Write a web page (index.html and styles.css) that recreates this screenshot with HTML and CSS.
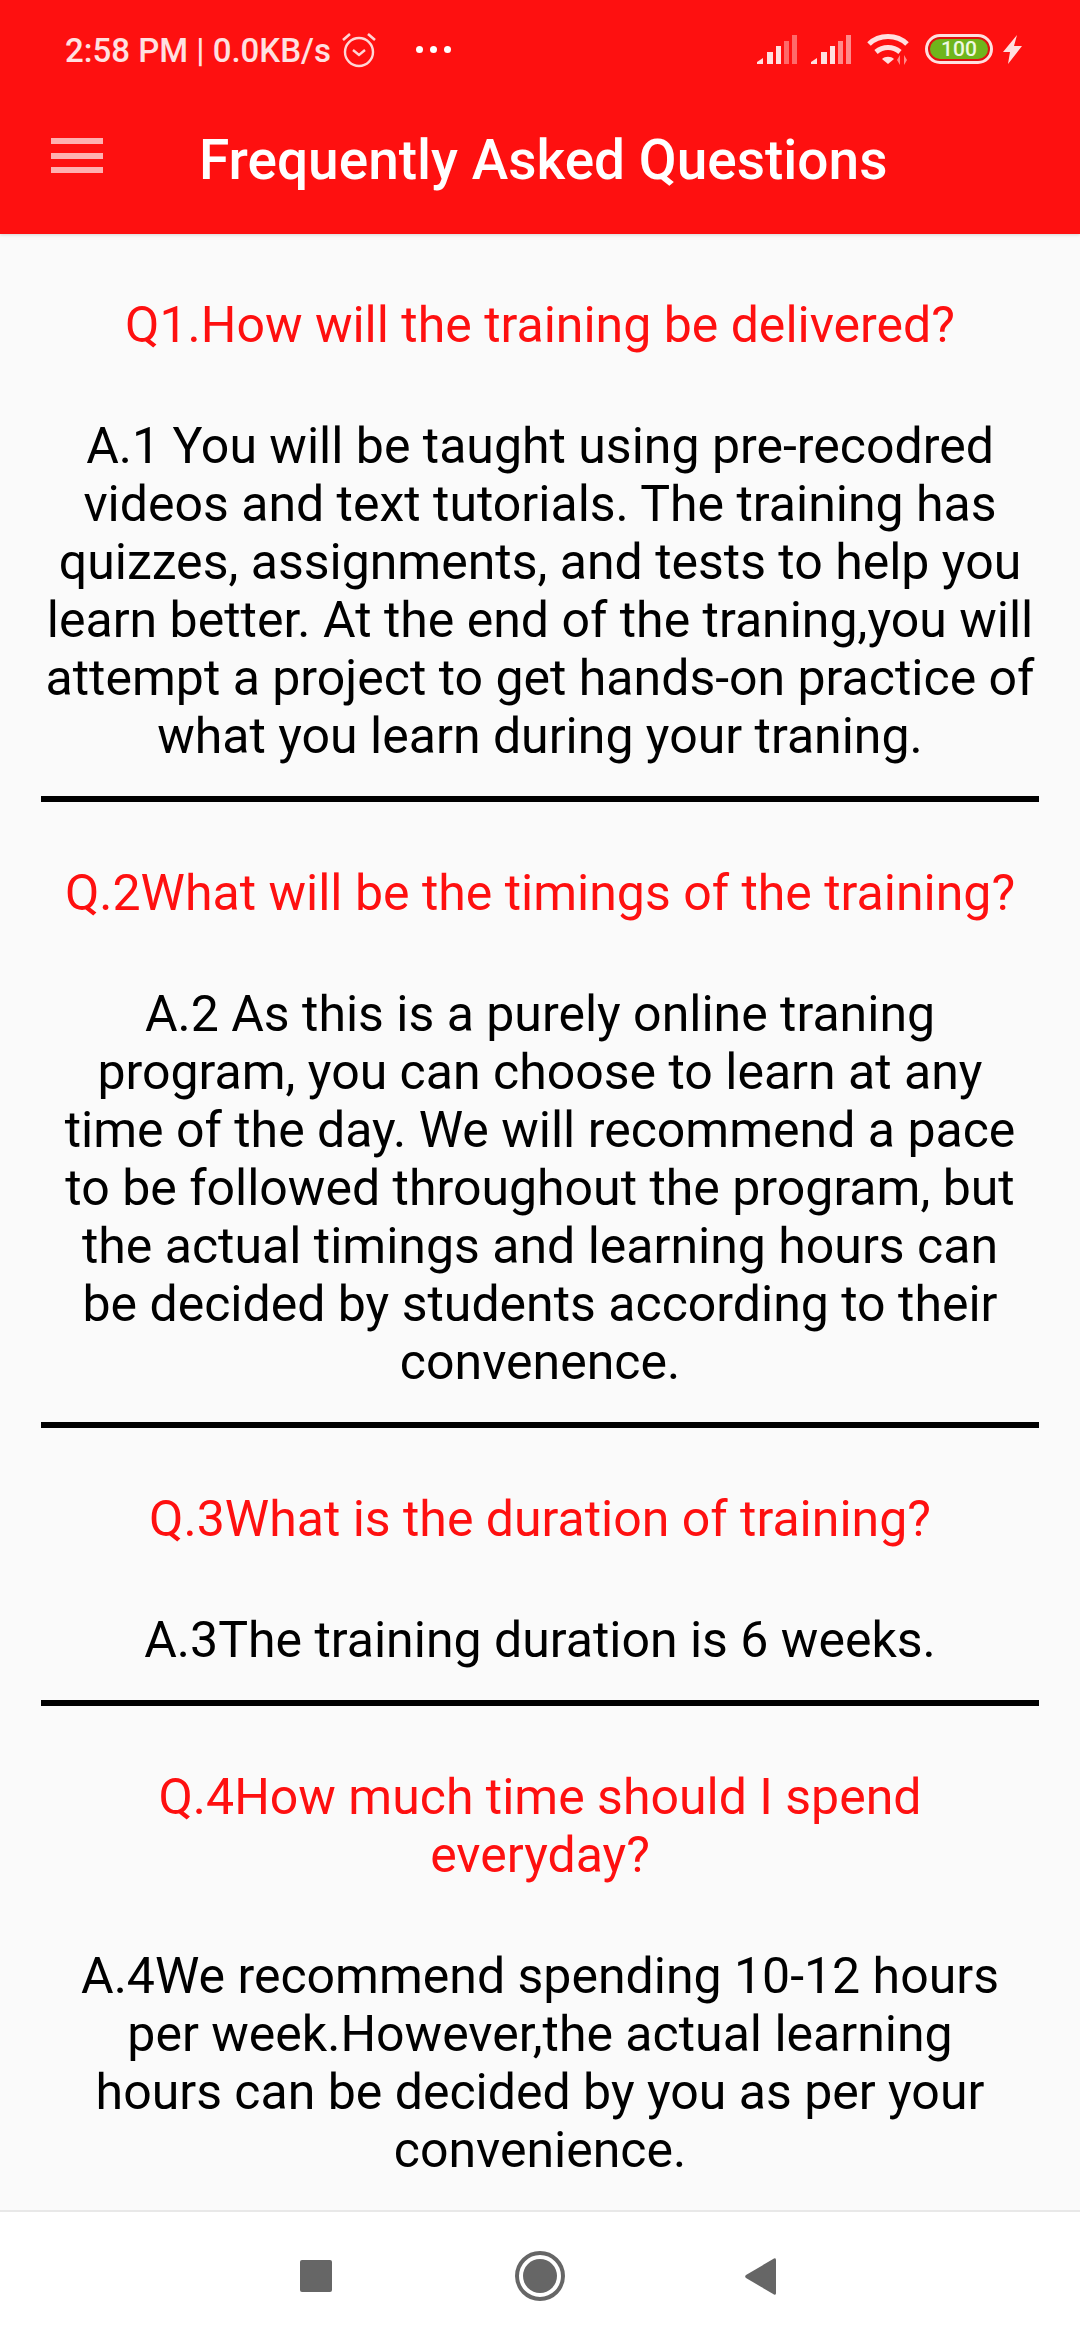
FILE: index.html
```html
<!DOCTYPE html>
<html lang="en">
<head>
<meta charset="utf-8">
<title>Frequently Asked Questions</title>
<link rel="stylesheet" href="styles.css">
</head>
<body>
<div class="screen">
  <header class="appbar">
    <div class="status">
      <div class="status-left">
        <span class="clock">2:58 PM | 0.0KB/s</span>
        <svg class="alarm" width="34" height="36" viewBox="0 0 34 36"><circle cx="17" cy="20" r="14" fill="none" stroke="#ffd6d6" stroke-width="2.4"/><path d="M11 18l6 5 6-5" fill="none" stroke="#ffd6d6" stroke-width="2.4"/><path d="M1 8l7-6M33 8l-7-6" stroke="#ffd6d6" stroke-width="2.6"/></svg>
        <span class="dots"><i></i><i></i><i></i></span>
      </div>
      <div class="status-right">
        <svg class="signal" width="40" height="29" viewBox="0 0 40 29"><path d="M0 29v-2l6-4v6z" fill="#ffe0e0"/><rect x="10" y="17" width="6" height="12" fill="#ffe0e0"/><rect x="19" y="11" width="5" height="18" fill="#ffe0e0"/><rect x="27" y="6" width="5" height="23" fill="#ff6a6a"/><rect x="35" y="0" width="5" height="29" fill="#ff6a6a"/></svg>
        <svg class="signal" width="40" height="29" viewBox="0 0 40 29"><path d="M0 29v-2l6-4v6z" fill="#ffe0e0"/><rect x="10" y="17" width="6" height="12" fill="#ffe0e0"/><rect x="19" y="11" width="5" height="18" fill="#ffe0e0"/><rect x="27" y="6" width="5" height="23" fill="#ff8a8a"/><rect x="35" y="0" width="5" height="29" fill="#ff8a8a"/></svg>
        <svg class="wifi" width="42" height="33" viewBox="0 0 42 33"><path d="M2 11C12 1 30 1 40 11M9 19c7-6 17-6 24 0" fill="none" stroke="#ffe0e0" stroke-width="5"/><path d="M15 26c3-3 9-3 12 0l-6 5z" fill="#ffe0e0"/><path d="M33 22v10l-3-5zM37 22v10l3-5z" fill="#ff8a8a"/></svg>
        <div class="battery"><span class="battery-fill">100</span></div>
        <svg class="bolt" width="19" height="29" viewBox="0 0 19 29"><path d="M14 0L0 17h7L5 29l14-18h-8z" fill="#ffe0e0"/></svg>
      </div>
    </div>
    <div class="toolbar">
      <div class="menu"><i></i><i></i><i></i></div>
      <h1 class="title">Frequently Asked Questions</h1>
    </div>
  </header>
  <main class="faq">
    <section class="item">
      <h2 class="q">Q1.How will the training be delivered?</h2>
      <p class="a">A.1 You will be taught using pre-recodred videos and text tutorials. The training has quizzes, assignments, and tests to help you learn better. At the end of the traning,you will attempt a project to get hands-on practice of what you learn during your traning.</p>
    </section>
    <section class="item">
      <h2 class="q">Q.2What will be the timings of the training?</h2>
      <p class="a">A.2 As this is a purely online traning<br>program, you can choose to learn at any<br>time of the day. We will recommend a pace<br>to be followed throughout the program, but<br>the actual timings and learning hours can<br>be decided by students according to their<br>convenence.</p>
    </section>
    <section class="item">
      <h2 class="q">Q.3What is the duration of training?</h2>
      <p class="a">A.3The training duration is 6 weeks.</p>
    </section>
    <section class="item last">
      <h2 class="q">Q.4How much time should I spend everyday?</h2>
      <p class="a">A.4We recommend spending 10-12 hours<br>per week.However,the actual learning<br>hours can be decided by you as per your<br>convenience.</p>
    </section>
  </main>
  <nav class="navbar">
    <span class="nav-square"></span>
    <svg class="nav-home" width="50" height="50" viewBox="0 0 50 50"><circle cx="25" cy="25" r="23" fill="none" stroke="#666" stroke-width="4"/><circle cx="25" cy="25" r="17" fill="#666"/></svg>
    <svg class="nav-back" width="31" height="37" viewBox="0 0 31 37"><path d="M29 .5a1.500 1.500 0 0 1 2 1v34a1.500 1.500 0 0 1-2 1L1 20a2 2 0 0 1 0-3z" fill="#666"/></svg>
  </nav>
</div>
</body>
</html>
```
FILE: styles.css
```css
* { box-sizing: border-box; }
html, body { margin: 0; padding: 0; }
body { font-family: Roboto, "Liberation Sans", sans-serif; background: #fafafa; }
.screen { width: 1080px; height: 2340px; display: flex; flex-direction: column; overflow: hidden; }

.appbar { height: 234px; flex: none; background: #fe1010; display: flex; flex-direction: column; box-shadow: 0 1px 3px rgba(0,0,0,.15); position: relative; z-index: 1; }
.status { height: 99px; flex: none; display: flex; justify-content: space-between; align-items: center; padding: 2px 58px 0 65px; }
.status-left { display: flex; align-items: center; }
.clock { font-size: 33px; font-weight: 500; color: #ffe0e0; white-space: nowrap; }
.alarm { margin-left: 11px; margin-top: -2px; }
.dots { display: flex; gap: 7px; margin-left: 40px; margin-top: -3px; }
.dots i { width: 7px; height: 7px; border-radius: 50%; background: #fff; }
.status-right { display: flex; align-items: center; margin-bottom: 3px; }
.signal { margin-right: 14px; }
.wifi { margin-left: 2px; margin-right: 16px; }
.battery { width: 68px; height: 30px; border: 3px solid #ffe0e0; border-radius: 15px; padding: 2px; background: #e01010; display: flex; }
.battery-fill { flex: 1; background: #6fb51c; border-radius: 11px; color: #eef8e0; font-size: 21px; font-weight: 500; line-height: 20px; text-align: center; }
.bolt { margin-left: 10px; }

.toolbar { flex: 1; display: flex; align-items: center; padding-bottom: 13px; }
.menu { width: 52px; margin: 0 0 9px 51px; display: flex; flex-direction: column; gap: 8.500px; }
.menu i { display: block; height: 6px; background: #ffb0b0; }
.title { margin: 0 0 0 96px; font-size: 55px; font-weight: 500; color: #fff; white-space: nowrap; }

.faq { flex: 1; padding: 62px 41px 0; min-height: 0; overflow: hidden; }
.item { border-bottom: 6px solid #000; padding-bottom: 31px; margin-bottom: 62px; }
.item.last { border-bottom: none; }
.q { margin: 0 4px 63px; font-size: 50px; line-height: 58px; font-weight: 400; color: #fe1010; text-align: center; }
.a { margin: 0 4px; font-size: 50px; line-height: 58px; font-weight: 400; color: #000; text-align: center; }

.navbar { height: 130px; flex: none; background: #fff; border-top: 2px solid #e8e8e8; display: flex; align-items: center; padding-left: 300px; }
.nav-square { width: 32px; height: 32px; background: #666; border-radius: 2px; }
.nav-home { margin-left: 183px; }
.nav-back { margin-left: 180px; }
```
